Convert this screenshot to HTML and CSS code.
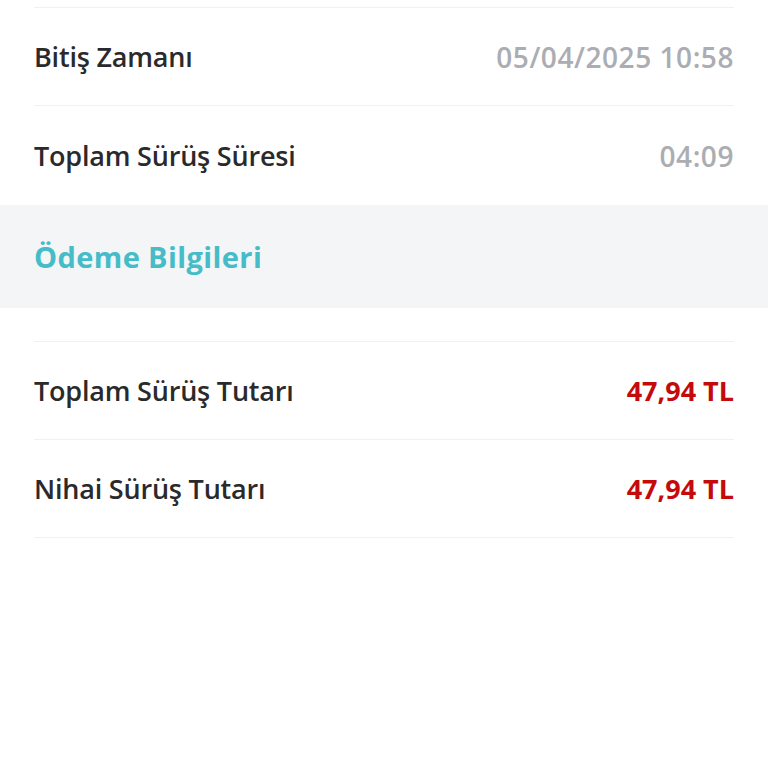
FILE: index.html
```html
<!DOCTYPE html>
<html lang="tr">
<head>
<meta charset="utf-8">
<link rel="stylesheet" href="styles.css">
</head>
<body>
<div class="page">
  <div class="list top">
    <div class="row"><span class="label">Bitiş Zamanı</span><span class="value muted">05/04/2025 10:58</span></div>
    <div class="row last"><span class="label">Toplam Sürüş Süresi</span><span class="value muted">04:09</span></div>
  </div>
  <div class="section"><span class="section-title">Ödeme Bilgileri</span></div>
  <div class="list bottom">
    <div class="row"><span class="label">Toplam Sürüş Tutarı</span><span class="value price">47,94 TL</span></div>
    <div class="row"><span class="label">Nihai Sürüş Tutarı</span><span class="value price">47,94 TL</span></div>
  </div>
</div>
</body>
</html>
```
FILE: styles.css
```css
html, body {
  margin: 0;
  padding: 0;
  background: #ffffff;
}
.page {
  width: 768px;
  font-family: "Open Sans", "Noto Sans", sans-serif;
}
.list {
  padding: 0 34px;
}
.list.top {
  padding-top: 7px;
}
.list.bottom {
  padding-top: 33px;
}
.row {
  display: flex;
  justify-content: space-between;
  align-items: center;
  height: 97px;
  border-top: 1px solid #f1f1f3;
}
.list.bottom .row:last-child {
  border-bottom: 1px solid #f1f1f3;
}
.row.last {
  height: 99px;
}
.label {
  font-size: 27px;
  font-weight: 600;
  color: #2a2a2c;
  letter-spacing: -0.2px;
}
.value {
  font-weight: 600;
}
.muted {
  color: #abadb2;
  font-size: 28px;
  letter-spacing: 0.55px;
}
.price {
  color: #c40a0a;
  font-size: 27px;
  font-weight: 700;
  letter-spacing: 0;
}
.section {
  background: #f4f5f7;
  height: 103px;
  display: flex;
  align-items: center;
  padding: 0 34px;
}
.section-title {
  font-size: 29px;
  font-weight: 700;
  color: #45bcc8;
  letter-spacing: 0.4px;
}
```
